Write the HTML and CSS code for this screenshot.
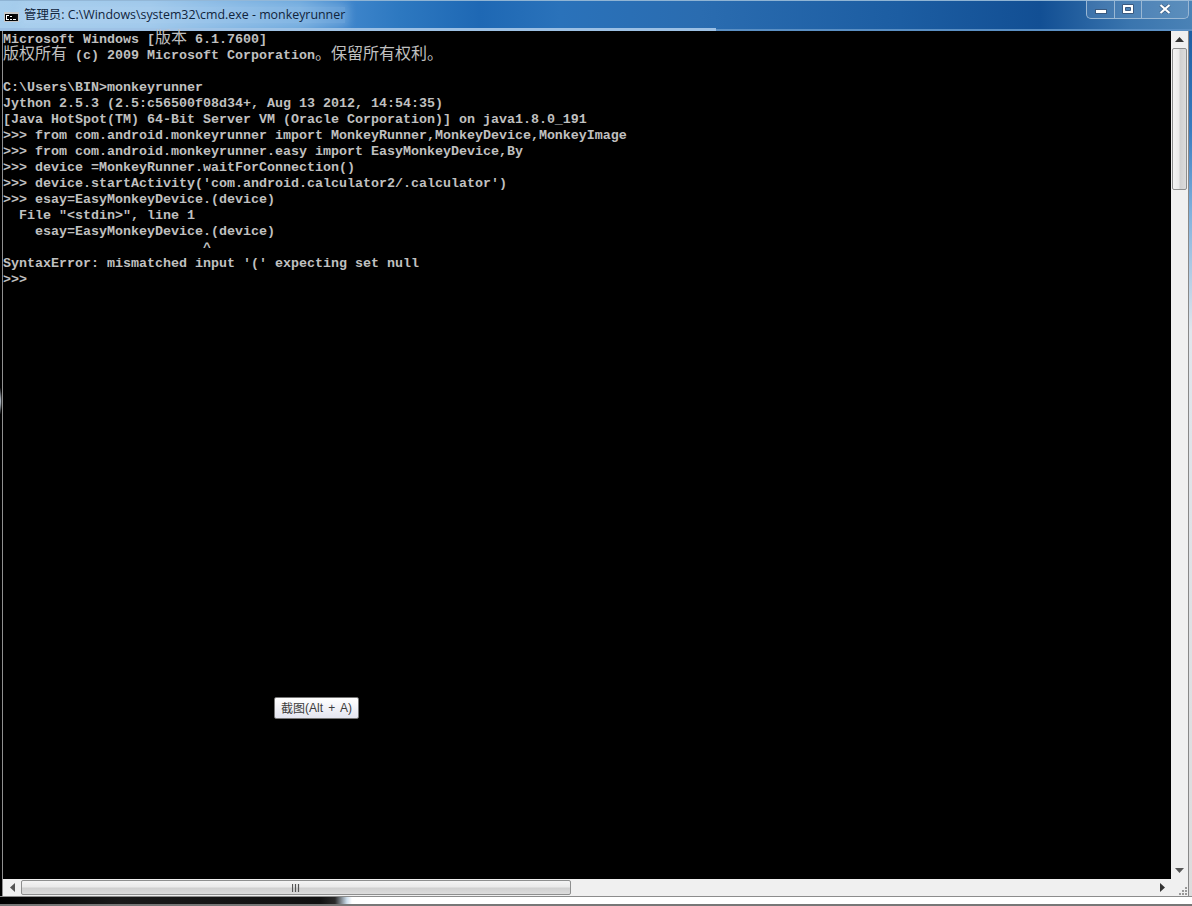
FILE: index.html
```html
<!DOCTYPE html>
<html lang="zh">
<head>
<meta charset="utf-8">
<title>cmd</title>
<link rel="stylesheet" href="styles.css">
</head>
<body>
<div class="window">
  <header class="titlebar">
    <div class="title-left">
      <svg class="app-icon" width="15" height="10" viewBox="0 0 15 10"><rect width="15" height="10" fill="#c8c8c8"/><rect x="1" y="2" width="13" height="7" fill="#000"/><rect x="2" y="3" width="3" height="1" fill="#fff"/><rect x="2" y="3" width="1" height="4" fill="#fff"/><rect x="2" y="7" width="3" height="1" fill="#fff"/><rect x="6" y="4" width="2" height="1" fill="#fff"/><rect x="6" y="7" width="2" height="1" fill="#fff"/><rect x="9" y="7" width="3" height="1" fill="#fff"/></svg>
      <span class="title-text">管理员: C:\Windows\system32\cmd.exe - monkeyrunner</span>
    </div>
    <div class="caption">
      <div class="cap cap-min"><svg width="12" height="5" viewBox="0 0 12 5"><rect x=".5" y=".5" width="11" height="4" fill="#fff" stroke="#3a5a80"/></svg></div>
      <div class="cap cap-max"><svg width="12" height="10" viewBox="0 0 12 10"><path d="M.5.5h11v9H.5z M3.500 3.500v3h5v-3z" fill="#fff" fill-rule="evenodd" stroke="#3a5a80" stroke-width="1"/></svg></div>
      <div class="cap cap-close"><svg width="12" height="10" viewBox="0 0 12 10"><path d="M1.500 1 L10.500 9 M10.500 1 L1.500 9" stroke="#3a5a80" stroke-width="3.400" fill="none"/><path d="M1.500 1 L10.500 9 M10.500 1 L1.500 9" stroke="#fff" stroke-width="2.200" fill="none"/></svg></div>
    </div>
  </header>
  <div class="body">
    <div class="main">
      <main class="console">
        <div class="row">Microsoft Windows [<span class="cjk">版本</span> 6.1.7600]</div>
        <div class="row"><span class="cjk">版权所有</span> (c) 2009 Microsoft Corporation<span class="cjk">。保留所有权利。</span></div>
        <div class="row">&nbsp;</div>
        <div class="row">C:\Users\BIN&gt;monkeyrunner</div>
        <div class="row">Jython 2.5.3 (2.5:c56500f08d34+, Aug 13 2012, 14:54:35)</div>
        <div class="row">[Java HotSpot(TM) 64-Bit Server VM (Oracle Corporation)] on java1.8.0_191</div>
        <div class="row">&gt;&gt;&gt; from com.android.monkeyrunner import MonkeyRunner,MonkeyDevice,MonkeyImage</div>
        <div class="row">&gt;&gt;&gt; from com.android.monkeyrunner.easy import EasyMonkeyDevice,By</div>
        <div class="row">&gt;&gt;&gt; device =MonkeyRunner.waitForConnection()</div>
        <div class="row">&gt;&gt;&gt; device.startActivity('com.android.calculator2/.calculator')</div>
        <div class="row">&gt;&gt;&gt; esay=EasyMonkeyDevice.(device)</div>
        <div class="row">  File "&lt;stdin&gt;", line 1</div>
        <div class="row">    esay=EasyMonkeyDevice.(device)</div>
        <div class="row">                         ^</div>
        <div class="row">SyntaxError: mismatched input '(' expecting set null</div>
        <div class="row">&gt;&gt;&gt;</div>
      </main>
      <div class="vscroll">
        <div class="sb-btn"><svg width="9" height="5" viewBox="0 0 9 5"><path d="M4.500 0 L9 5 H0z" fill="#333"/></svg></div>
        <div class="vthumb"></div>
        <div class="sb-fill"></div>
        <div class="sb-btn"><svg width="9" height="5" viewBox="0 0 9 5"><path d="M0 0 H9 L4.500 5z" fill="#555"/></svg></div>
      </div>
    </div>
    <div class="hscroll">
      <div class="sb-btn-h sb-first"><svg width="5" height="9" viewBox="0 0 5 9"><path d="M5 0 V9 L0 4.500z" fill="#555"/></svg></div>
      <div class="hthumb"><svg width="8" height="8" viewBox="0 0 8 8"><path d="M.5 0v8M3.500 0v8M6.500 0v8" stroke="#555" stroke-width="1.200"/></svg></div>
      <div class="sb-fill-h"></div>
      <div class="sb-btn-h"><svg width="5" height="9" viewBox="0 0 5 9"><path d="M0 0 V9 L5 4.500z" fill="#333"/></svg></div>
      <div class="corner"><svg width="11" height="11" viewBox="0 0 11 11"><g fill="#999"><rect x="8" y="2" width="2" height="2"/><rect x="5" y="5" width="2" height="2"/><rect x="8" y="5" width="2" height="2"/><rect x="2" y="8" width="2" height="2"/><rect x="5" y="8" width="2" height="2"/><rect x="8" y="8" width="2" height="2"/></g></svg></div>
    </div>
  </div>
  <div class="bottom-strip"></div>
</div>
<div class="tooltip"><span class="tip-cjk">截图</span>(Alt + A)</div>
</body>
</html>
```
FILE: styles.css
```css
* { box-sizing: border-box; }
html, body { margin: 0; padding: 0; height: 100%; background: #000; overflow: hidden; }
.window { width: 1192px; height: 906px; display: flex; flex-direction: column; }
.titlebar {
  height: 31px; flex: none; display: flex; justify-content: space-between; align-items: flex-start;
  background:
    linear-gradient(#9cc0e4, #9cc0e4) no-repeat 0 100% / 716px 3px,
    linear-gradient(#5a8fc4, #5a8fc4) no-repeat 0 100% / 100% 2px,
    linear-gradient(90deg, #a6cdec 0, #9cc6ea 150px, #6aa6dc 300px, #3f86cc 345px, #2d78c0 400px, #1e68b4 480px, #2a72ba 560px, #2a6cb0 700px, #1c5da2 900px, #124f94 1040px, #3a75ae 1130px, #4a82b6 1192px);
  border-top: 1px solid #8fb4d4;
}
.title-left { display: flex; align-items: center; height: 28px; padding-left: 4px; gap: 5px; }
.app-icon { flex: none; margin-top: 3px; }
.title-text { font: 12.4px/16px "Open Sans", "Noto Sans CJK SC", sans-serif; color: #10243c; white-space: nowrap; background: rgba(190,220,245,.3); box-shadow: 0 0 8px 4px rgba(190,220,245,.3); }
.caption { display: flex; height: 19px; margin-top: -1px; margin-right: 3px; border: 1px solid #9ab8d4; border-top: 0; border-radius: 0 0 5px 5px; background: rgba(255,255,255,.1); }
.cap { display: flex; align-items: center; justify-content: center; }
.cap-min { width: 28px; padding-top: 4px; border-right: 1px solid #9ab8d4; }
.cap-max { width: 27px; border-right: 1px solid #9ab8d4; }
.cap-close { width: 46px; }
.body {
  flex: 1; display: flex; flex-direction: column; min-height: 0; padding: 0 4px 0 3px;
  background:
    linear-gradient(#909090, #909090) no-repeat 2px 0 / 1px 100%,
    radial-gradient(ellipse 2px 14px at 0 370px, #dde8f4, #000) no-repeat 0 0 / 2px 100%,
    linear-gradient(#888, #888) no-repeat 1188px 0 / 1px 100%,
    linear-gradient(180deg, #1c5da2 0, #3a7cc0 100px, #7fb0dc 180px, #e0e6ec 300px, #dcdcdc 100%) no-repeat 1189px 0 / 3px 100%,
    #000;
}
.main { flex: 1; display: flex; min-height: 0; }
.console { flex: 1; background: #000; color: #c0c0c0; padding-top: 1px; font: bold 13.333px/16px "Liberation Mono", "Noto Sans CJK SC", monospace; }
.row { height: 16px; white-space: pre; }
.cjk { font: 400 16px/0 "Noto Sans CJK SC", sans-serif; }
.vscroll { width: 17px; flex: none; display: flex; flex-direction: column; background: #f0f0f0; }
.sb-btn { height: 17px; flex: none; display: flex; align-items: center; justify-content: center; }
.vthumb { height: 142px; flex: none; margin: 0 1px; border: 1px solid #8e8f8f; border-radius: 2px; background: linear-gradient(90deg, #f4f4f4 0, #eaeaea 45%, #d0d0d0 55%, #dcdcdc 100%); }
.sb-fill { flex: 1; }
.hscroll { height: 17px; flex: none; display: flex; align-items: center; background: #f0f0f0; }
.sb-btn-h { width: 17px; height: 17px; flex: none; display: flex; align-items: center; justify-content: center; }
.sb-first { width: 18px; }
.hthumb { width: 550px; height: 15px; flex: none; display: flex; align-items: center; justify-content: center; border: 1px solid #8e8f8f; border-radius: 2px; background: linear-gradient(180deg, #f4f4f4 0, #eaeaea 45%, #d0d0d0 55%, #dcdcdc 100%); }
.sb-fill-h { flex: 1; }
.corner { width: 17px; height: 17px; flex: none; display: flex; align-items: flex-end; justify-content: flex-end; }
.bottom-strip { height: 10px; flex: none; border-top: 1px solid #8c8c8c; border-bottom: 2px solid #777; background: linear-gradient(90deg, #000 0, #1a1a1a 120px, #111 320px, #2a2a2a 335px, #cfe0ee 347px, #fff 352px, #fff 100%); }
.tooltip { position: absolute; left: 274px; top: 697px; width: 85px; height: 22px; display: flex; align-items: center; justify-content: center; border: 1px solid #767676; border-radius: 2px; background: linear-gradient(180deg, #fff, #e4e5f0); color: #3c3c3c; font: 12px/16px "Liberation Sans", sans-serif; word-spacing: 2px; white-space: nowrap; }
.tip-cjk { font-family: "Noto Sans CJK SC", sans-serif; }
```
